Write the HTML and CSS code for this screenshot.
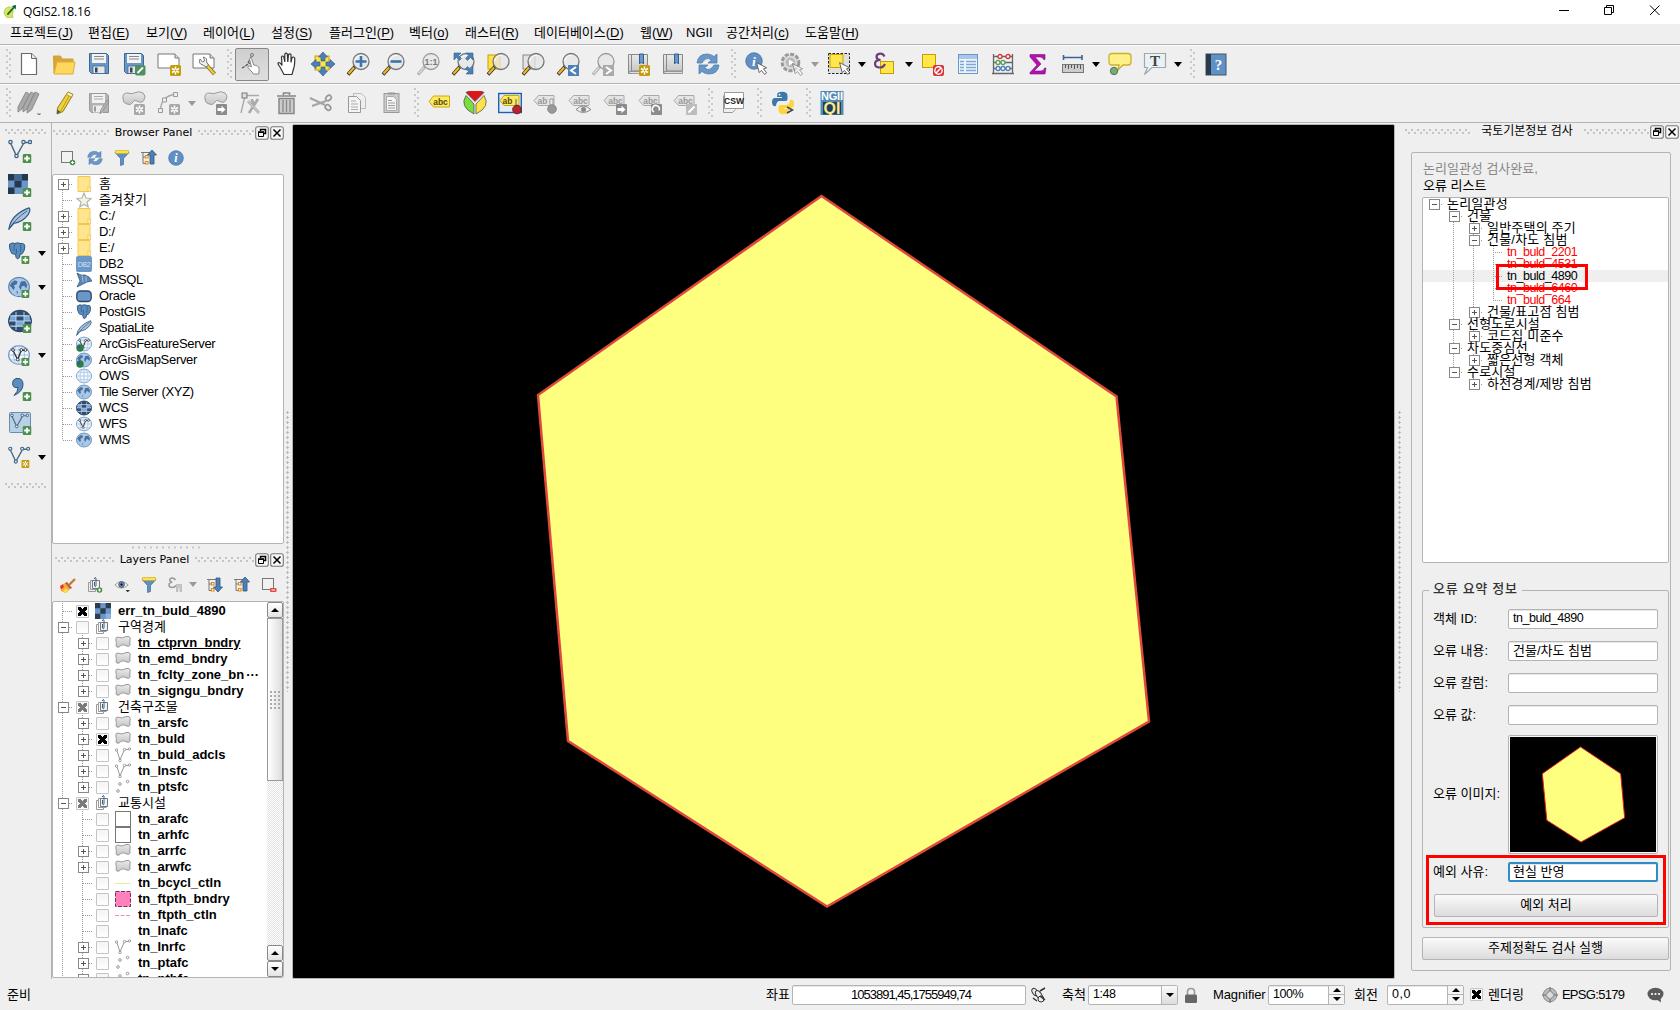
FILE: index.html
```html
<!DOCTYPE html>
<html lang="ko">
<head>
<meta charset="utf-8">
<title>QGIS2.18.16</title>
<link rel="stylesheet" href="styles.css">
</head>
<body>
<svg class="defs">
<defs>
<linearGradient id="gy" x2="1" y2="1"><stop offset="0" stop-color="#fdf094"/><stop offset="1" stop-color="#e3bd1c"/></linearGradient>
<linearGradient id="gg" x2="0" y2="1"><stop offset="0" stop-color="#e9e9e9"/><stop offset="1" stop-color="#c4c4c4"/></linearGradient>
<symbol id="plus" viewBox="0 0 9 9"><rect width="9" height="9" rx="1.5" fill="#4e8f4e"/><path d="M4.5 1.7v5.6M1.7 4.5h5.6" stroke="#fff" stroke-width="1.8"/></symbol>
<symbol id="star" viewBox="0 0 11 11"><rect width="11" height="11" rx="1.5" fill="#c49c0c"/><path d="M5.5 1.5v8M2 3.5l7 4M9 3.5l-7 4" stroke="#fff" stroke-width="1.5"/><circle cx="5.5" cy="5.5" r="1" fill="#c49c0c"/></symbol>
<symbol id="gstar" viewBox="0 0 11 11"><rect width="11" height="11" rx="1.5" fill="#a8a8a8"/><path d="M5.5 1.5v8M2 3.5l7 4M9 3.5l-7 4" stroke="#fff" stroke-width="1.5"/><circle cx="5.5" cy="5.5" r="1" fill="#a8a8a8"/></symbol>
<symbol id="garrow" viewBox="0 0 11 11"><rect width="11" height="11" rx="1" fill="#8b8b8b"/><path d="M1.500 4h4V1.700l4 3.800-4 3.800V7h-4z" fill="#fff"/></symbol>
<symbol id="cur" viewBox="0 0 12 13"><path d="M.6.6l2.600 10 2.200-2.200 3.200 4 2-1.600-3.200-4 3.200-1z" fill="#fff" stroke="#555" stroke-width=".9"/></symbol>
<symbol id="lens" viewBox="0 0 24 24"><path d="M9.500 14L2 22.500" stroke="#333" stroke-width="3.600"/><path d="M8 15.600L2.600 21.700" stroke="#f2b81c" stroke-width="2.200"/><circle cx="15" cy="9.500" r="8" fill="#e4e6e7" fill-opacity=".75" stroke="#777" stroke-width="1.300"/><path d="M9 9a6 6 0 0 1 7-5.500" stroke="#fff" fill="none"/></symbol>
<symbol id="glens" viewBox="0 0 24 24"><path d="M9.500 14L2 22.500" stroke="#aaa" stroke-width="3.200"/><path d="M8 15.600L2.600 21.700" stroke="#ddd" stroke-width="1.500"/><circle cx="15" cy="9.500" r="8" fill="#e8e8e8" stroke="#9a9a9a" stroke-width="1.300"/></symbol>
<symbol id="new" viewBox="0 0 24 24"><path d="M4.500 1.500h10l5 5v16h-15z" fill="#fff" stroke="#6b6b6b" stroke-width="1.200"/><path d="M14.500 1.500v5h5" fill="#e8e8e8" stroke="#6b6b6b"/></symbol>
<symbol id="open" viewBox="0 0 24 24"><path d="M1.500 4h7l1.500 3h11v4H5L2 21z" fill="#d7a63a" stroke="#d2a237"/><path d="M5 10h18l-2 12H2z" fill="#ffd75e" stroke="#dfad3f"/></symbol>
<symbol id="save" viewBox="0 0 24 24"><path d="M2.500 1.500h17l2 2v18h-17l-2-2z" fill="#6a97c8" stroke="#3c6693"/><rect x="5" y="2" width="14" height="9" fill="#f4f4f4"/><path d="M7 4.500h10M7 7h10" stroke="#888"/><rect x="6" y="14" width="12" height="7.500" fill="#e6e6e6" stroke="#3c6693" stroke-width=".8"/><rect x="8" y="15.500" width="2.500" height="5" fill="#345"/></symbol>
<symbol id="gsave" viewBox="0 0 24 24"><path d="M2.500 2.500h17l2 2v17h-17l-2-2z" fill="#b3b3b3" stroke="#999"/><rect x="5" y="3" width="13" height="9" fill="#f1f1f1"/><path d="M7 5.500h9M7 8h9" stroke="#aaa"/><rect x="6" y="14.500" width="10" height="7" fill="#eee"/><path d="M8 15.500v5" stroke="#999" stroke-width="2"/><path d="M22 10l-7 11-2 2 .5-3.500L20 9z" fill="#bbb" stroke="#888" stroke-width=".8"/></symbol>
<symbol id="saveas" viewBox="0 0 24 24"><use href="#save"/><rect x="13" y="13" width="10.500" height="10.500" rx="2" fill="#4e8f5e"/><path d="M15.500 21l5.500-5.500" stroke="#fff" stroke-width="2"/></symbol>
<symbol id="comp" viewBox="0 0 24 24"><path d="M1 2h17l4 4v10H1z" fill="#fff" stroke="#777"/><path d="M18 2v4h4" fill="#ddd" stroke="#777"/></symbol>
<symbol id="ncomp" viewBox="0 0 24 24"><use href="#comp"/><use href="#star" x="13" y="13" width="11" height="11"/></symbol>
<symbol id="mcomp" viewBox="0 0 24 24"><use href="#comp"/><path d="M14.500 13l8 9" stroke="#8c6b1d" stroke-width="4"/><path d="M15 13.500l7.200 8.200" stroke="#f1cb48" stroke-width="2.200"/><path d="M8 7q-2 5 3 6l3 2 2.500-2-2-3q1-4-3-5l1 4-2 1z" fill="#eee" stroke="#777"/></symbol>
<symbol id="touch" viewBox="0 0 24 24"><path d="M2 16l8-5M8 11l3.500-7" stroke="#555" stroke-width="1.200" stroke-dasharray="3 1"/><circle cx="12" cy="3" r="1.500" fill="none" stroke="#777"/><path d="M9.500 7q1-2 2.200 0l2 6 3 .5q2.800 1 2.500 4l-.5 4.500h-5L8 15.500q0-2 2-1.500l1.500 1z" fill="#fff" stroke="#888"/></symbol>
<symbol id="hand" viewBox="0 0 24 24"><path d="M8 22.500L4 15Q.8 11 2.800 10.500q1.700 0 3.200 3L5.500 5q.8-2 2.300 0l1 5V2q1.300-1.800 2.500 0l.5 8 .7-7.500q1.500-1.500 2.500.2L15 10.500l1-5q1.700-1.200 2.700.5Q19 13 17.500 17l-1.500 5.500z" fill="#fff" stroke="#333" stroke-width="1.200"/></symbol>
<symbol id="pan" viewBox="0 0 24 24"><rect x="4" y="4" width="14" height="14" fill="#ffe24a" stroke="#c6a000"/><path d="M12 0l4.500 5H14v4h-4V5H7.500zM12 24l-4.500-5H10v-4h4v4h2.500zM0 12l5-4.500V10h4v4H5v2.500zM24 12l-5 4.500V14h-4v-4h4V7.500z" fill="#4c80b6" stroke="#315f8f" stroke-width=".7"/></symbol>
<symbol id="zin" viewBox="0 0 24 24"><use href="#lens"/><path d="M15 4v11M9.500 9.500h11" stroke="#3d73ad" stroke-width="2.600"/></symbol>
<symbol id="zout" viewBox="0 0 24 24"><use href="#lens"/><path d="M9.500 9.500h11" stroke="#3d73ad" stroke-width="2.600"/></symbol>
<symbol id="z11" viewBox="0 0 24 24"><use href="#glens"/><text x="15" y="12.500" class="ib" font-size="9" text-anchor="middle" fill="#777">1:1</text></symbol>
<symbol id="zfull" viewBox="0 0 24 24"><use href="#lens"/><path d="M3 1h7L7.500 3.500l3 3-2 2-3-3L3 8zM22 1h-7l2.500 2.500-3 3 2 2 3-3L22 8zM22 22h-7l2.500-2.500-3-3 2-2 3 3L22 14z" fill="#4c80b6" stroke="#315f8f" stroke-width=".6"/></symbol>
<symbol id="zsel" viewBox="0 0 24 24"><rect x="2" y="3" width="12" height="14" fill="#ffe24a" stroke="#c6a000"/><use href="#lens"/></symbol>
<symbol id="zlay" viewBox="0 0 24 24"><rect x="2" y="3" width="12" height="14" fill="#e3e3e3" stroke="#888"/><use href="#lens"/></symbol>
<symbol id="zprev" viewBox="0 0 24 24"><use href="#lens"/><rect x="12" y="13" width="11" height="11" fill="#4c80b6"/><path d="M20 15l-5 3.500 5 3.500" fill="none" stroke="#fff" stroke-width="2"/></symbol>
<symbol id="znext" viewBox="0 0 24 24"><use href="#glens"/><rect x="12" y="13" width="11" height="11" fill="#aaa"/><path d="M15 15l5 3.500-5 3.500" fill="none" stroke="#fff" stroke-width="2"/></symbol>
<symbol id="book" viewBox="0 0 24 24"><path d="M2.500 2.500h3v19h-3zM5.500 2.500h16v16.500h-16z" fill="url(#gg)" stroke="#888"/><path d="M3 19.500h18.500v2H3z" fill="#ddd" stroke="#888" stroke-width=".8"/><path d="M13.500 2h4v10l-2-2-2 2z" fill="#6a97c8" stroke="#315f8f"/></symbol>
<symbol id="nbook" viewBox="0 0 24 24"><use href="#book"/><use href="#star" x="13" y="13" width="11" height="11"/></symbol>
<symbol id="refresh" viewBox="0 0 24 24"><path d="M1 11Q2 2 11 2q4 0 7 2.500L21 2v9h-9l3.500-3Q10 4 6 11zM23 13q-1 9-10 9-4 0-7-2.500L3 22v-9h9l-3.500 3Q14 20 18 13z" fill="#6a97c8" stroke="#4477aa" stroke-width=".7"/></symbol>
<symbol id="info" viewBox="0 0 24 24"><circle cx="12" cy="12" r="11" fill="#5f8fc3" stroke="#3e6c9f"/><text x="12" y="18" text-anchor="middle" class="is" font-size="18" fill="#fff">i</text></symbol>
<symbol id="ident" viewBox="0 0 24 24"><use href="#info" width="18" height="18"/><use href="#cur" x="11" y="10" width="12" height="13"/></symbol>
<symbol id="action" viewBox="0 0 24 24"><circle cx="10.500" cy="10.500" r="8.300" fill="#ddd" stroke="#999" stroke-width="3" stroke-dasharray="4 1.500"/><circle cx="10.500" cy="10.500" r="5" fill="#bbb"/><path d="M9 7.500l5 3-5 3z" fill="#fff"/><use href="#cur" x="12" y="11" width="12" height="13" opacity=".6"/></symbol>
<symbol id="select" viewBox="0 0 24 24"><path d="M1.500 1.500h21v20h-21z" fill="#e0e0e0" stroke="#222" stroke-dasharray="2.500 1.500"/><path d="M3 2.500h13v13H3z" fill="#ffe64a" stroke="#c6a000"/><use href="#cur" x="12" y="10" width="12" height="13"/></symbol>
<symbol id="eps" viewBox="0 0 24 24"><rect x="6.500" y="9.500" width="13" height="12" fill="#ffe64a" stroke="#c6a000"/><path d="M10.500 4.500Q9 1.500 6 1.700 2.500 2 2.500 5q0 2.500 4 3Q1 8 1 12q.3 3.500 4.500 3.500 4 0 5.500-3.500" fill="none" stroke="#6c3d78" stroke-width="2.200"/></symbol>
<symbol id="desel" viewBox="0 0 24 24"><rect x="1.500" y="2.500" width="13" height="13" fill="#ffe64a" stroke="#c6a000"/><rect x="12" y="13" width="11" height="11" rx="2" fill="#d9303a"/><circle cx="17.500" cy="18.500" r="3.700" fill="none" stroke="#fff" stroke-width="1.400"/><path d="M15 21l5-5" stroke="#fff" stroke-width="1.400"/></symbol>
<symbol id="table" viewBox="0 0 24 24"><rect x="2.500" y="2.500" width="19" height="19" fill="#eef4fb" stroke="#6b97c8"/><rect x="3" y="3" width="18" height="4" fill="#a8c6e8"/><path d="M4 9.500h4M10 9.500h10M4 12.500h4M10 12.500h10M4 15.500h4M10 15.500h10M4 18.500h4M10 18.500h10" stroke="#7fa7d4" stroke-width="1.300"/></symbol>
<symbol id="abac" viewBox="0 0 24 24"><path d="M2.500 2v19M21.500 2v19M2 4.500h20M2 10.500h20M2 16.500h20M1 21.500h22" stroke="#666" stroke-width="1.300"/><g fill="#fff" stroke-width="1.300"><g stroke="#d5323a"><circle cx="9" cy="4.500" r="2"/><circle cx="17" cy="4.500" r="2"/></g><g stroke="#55a055"><circle cx="7" cy="10.500" r="2"/><circle cx="12" cy="10.500" r="2"/></g><g stroke="#4c80b6"><circle cx="7" cy="16.500" r="2"/><circle cx="12" cy="16.500" r="2"/><circle cx="17" cy="16.500" r="2"/></g></g></symbol>
<symbol id="sigma" viewBox="0 0 24 24"><path d="M4 2.500h15v5h-1.500Q17 5 14 5H9l6 7-7 7h7q3 0 3.500-3H20l-1 6H4v-1.500l7-7.500-7-8z" fill="#b012ae" stroke="#840f82" stroke-width=".6"/></symbol>
<symbol id="meas" viewBox="0 0 24 24"><path d="M2 5.500h19M2.500 3v5M21 3v5" stroke="#3d648f" stroke-width="1.600"/><rect x="1.500" y="12.500" width="21" height="8" fill="#ccc" stroke="#777"/><path d="M4.500 13v3M7.500 13v4M10.500 13v3M13.500 13v4M16.500 13v3M19.500 13v4" stroke="#555"/></symbol>
<symbol id="tips" viewBox="0 0 24 24"><path d="M4 1.500h16q3 0 3 3V10q0 3-3 3h-5l-5 5 1-5H4q-3 0-3-3V4.500q0-3 3-3z" fill="#fff08a" stroke="#cdae2c" stroke-width="1.300"/><circle cx="6" cy="19" r="3.700" fill="#78a977" stroke="#4c7b55"/></symbol>
<symbol id="tanno" viewBox="0 0 24 24"><path d="M1.500 1.500h21v14H9l-7.500 7 3-7h-3z" fill="#ebf2f5" stroke="#a0a8ac" stroke-width="1.200"/><text x="12" y="13.500" text-anchor="middle" class="isb" font-size="15" fill="#444">T</text></symbol>
<symbol id="help" viewBox="0 0 24 24"><rect x="2" y="2" width="20" height="21" fill="#5f91c7" stroke="#456"/><rect x="2" y="2" width="5" height="21" fill="#2c3b4c"/><text x="14.500" y="18" text-anchor="middle" class="isb" font-size="15" fill="#fff">?</text></symbol>
<symbol id="pencil" viewBox="0 0 24 24"><path d="M16 1l5 2.500-10 17L5 23l.5-6z" fill="#f0d33a" stroke="#8c7a28"/><path d="M18.500 2.500l-10 18" stroke="#b8991b"/><path d="M5.300 18.500l3.500 2.500L5 23z" fill="#555"/><path d="M16 1l5 2.500-1.500 2.500-5-2.500z" fill="#fff6b0" stroke="#998830" stroke-width=".7"/></symbol>
<symbol id="gpencils" viewBox="0 0 24 24"><g fill="#a9a9a9" stroke="#8d8d8d"><path d="M9 1l3.500 2L5 18l-4 3 0-5zM14 1l3.500 2-7.500 15-4 3 0-5zM18 1l4 2-7.500 16-4.500 3 .5-5z"/></g><path d="M19.500 22.500h5l-2.500 2z" fill="#777"/></symbol>
<symbol id="blob" viewBox="0 0 24 24"><path d="M1 8Q0 1.500 6 2q3 1.500 6 0 5-2.500 9 0 3.500 3 1 7-2 4-7 1-3-1.500-4 1-2 4-6 2Q1 12 1 8z" fill="url(#gg)" stroke="#999"/></symbol>
<symbol id="addf" viewBox="0 0 24 24"><use href="#blob"/><use href="#gstar" x="12" y="13" width="11" height="11"/></symbol>
<symbol id="movef" viewBox="0 0 24 24"><use href="#blob"/><use href="#garrow" x="12" y="13" width="11" height="11"/></symbol>
<symbol id="node" viewBox="0 0 24 24"><path d="M3.500 19Q4 5 18 3.500" fill="none" stroke="#aaa" stroke-width="1.400"/><g fill="#eee" stroke="#999"><path d="M1.500 17.500h4v4h-4zM5.500 7h4v4h-4zM16.500 1.500h4v4h-4z"/></g><use href="#gstar" x="12" y="13" width="11" height="11"/></symbol>
<symbol id="nodet" viewBox="0 0 24 24"><path d="M6 4.500h14M6 5L2 22" stroke="#aaa" stroke-width="1.400"/><rect x="3" y="2" width="5" height="5" fill="#ddd" stroke="#777"/><path d="M9 10l11 12M19 8l-9 14M13 8q0 4 3 5" stroke="#aaa" stroke-width="2.600" fill="none"/><path d="M9 10l11 12" stroke="#ddd"/></symbol>
<symbol id="trash" viewBox="0 0 24 24"><path d="M5 7.500h15v15H5z" fill="#ccc" stroke="#888" stroke-width="1.500"/><path d="M3 5h19M9.500 4V2h6v2" stroke="#888" stroke-width="1.600" fill="none"/><path d="M9 9v12M12.500 9v12M16 9v12" stroke="#888" stroke-width="1.300"/></symbol>
<symbol id="cut" viewBox="0 0 24 24"><path d="M1 7l15 7M3 15l14-5" stroke="#a4a4a4" stroke-width="2"/><g fill="none" stroke="#999" stroke-width="1.700"><ellipse cx="19.500" cy="7" rx="3" ry="2.300" transform="rotate(-40 19.500 7)"/><ellipse cx="19" cy="16.500" rx="3" ry="2.300" transform="rotate(40 19 16.500)"/></g></symbol>
<symbol id="copy" viewBox="0 0 24 24"><path d="M9.500 2.500h8l4 4v11h-12z" fill="#eee" stroke="#bbb"/><path d="M4.500 5.500h8l4 4v12h-12z" fill="#f4f4f4" stroke="#999"/><path d="M7 10h5M7 13h7M7 16h7M7 18.500h7" stroke="#aaa"/></symbol>
<symbol id="paste" viewBox="0 0 24 24"><rect x="5" y="2.500" width="15" height="19" fill="#ccc" stroke="#999"/><path d="M7.500 5.500h7l3 3v11h-10z" fill="#f6f6f6" stroke="#aaa"/><path d="M9 9.500h4M9 12h7M9 14.500h7M9 17h7" stroke="#999"/><path d="M9 1.500h7v2H9z" fill="#999"/></symbol>
<symbol id="tag" viewBox="0 0 24 24"><path d="M1 10.500L5.500 5H21.500v11H5.500z" fill="#ffe95c" stroke="#c8a818"/><text x="12.500" y="13.500" text-anchor="middle" class="ib" font-size="8.500" fill="#554a10">abc</text></symbol>
<symbol id="gtag" viewBox="0 0 24 24"><path d="M1 9.500l4.500-5h15.500v10h-15.500z" fill="#e4e4e4" stroke="#aaa"/><text x="12.500" y="12.500" text-anchor="middle" class="ib" font-size="8.500" fill="#999">abc</text></symbol>
<symbol id="pie" viewBox="0 0 24 24"><g stroke="#555" stroke-width=".8"><path d="M12 12L3 3q9-5.500 18 0z" fill="#dd1717" transform="translate(0 -1.500)"/><path d="M11 13L3 4.500q-7 11 8 18.500z" fill="#79dd3c"/><path d="M13 13l8-8.500q7 11-8 18.500z" fill="#ffe14a"/></g></symbol>
<symbol id="tagpin" viewBox="0 0 24 24"><rect x=".7" y="2.500" width="22.600" height="19" fill="#e5ecf5" stroke="#1a5fb8" stroke-width="1.400"/><path d="M2 9.500l4-5h15v10h-15z" fill="#ffe95c" stroke="#c8a818"/><text x="4.500" y="12.500" class="ib" font-size="8.500" fill="#554a10">ab</text><path d="M18 8v8" stroke="#888" stroke-width="1.500"/><circle cx="19" cy="18.500" r="4.300" fill="#b4262c" stroke="#7c1318"/></symbol>
<symbol id="gpin" viewBox="0 0 24 24"><path d="M1 9.500l4.500-5h15.500v10h-15.500z" fill="#e4e4e4" stroke="#aaa"/><text x="4.500" y="12.500" class="ib" font-size="8.500" fill="#999">ab</text><path d="M17 8h3v7h-3z" fill="#eee" stroke="#999"/><circle cx="19" cy="18" r="4.300" fill="#999" stroke="#888"/></symbol>
<symbol id="geye" viewBox="0 0 24 24"><use href="#gtag"/><path d="M8 18.500q7-7 15 0-8 6-15 0z" fill="#eee" stroke="#888"/><circle cx="15.500" cy="18.500" r="2.500" fill="#888"/></symbol>
<symbol id="gmove" viewBox="0 0 24 24"><use href="#gtag"/><use href="#garrow" x="13" y="13" width="11" height="11"/></symbol>
<symbol id="grot" viewBox="0 0 24 24"><use href="#gtag"/><rect x="13" y="13" width="11" height="11" rx="1" fill="#8b8b8b"/><path d="M16 21a3.500 3.500 0 1 1 5-1.500" fill="none" stroke="#fff" stroke-width="1.600"/></symbol>
<symbol id="gedit" viewBox="0 0 24 24"><use href="#gtag"/><rect x="13" y="13" width="11" height="11" rx="1" fill="#bdbdbd"/><path d="M15.500 21.500l6-6" stroke="#fff" stroke-width="2"/></symbol>
<symbol id="csw" viewBox="0 0 24 24"><path d="M1.500 4.500v17h9l3-3" fill="#eee" stroke="#999"/><path d="M2.500 1.500h19v16h-19z" fill="#fff" stroke="#999"/><text x="12" y="13" text-anchor="middle" class="ib" font-size="8.500" fill="#222">CSW</text></symbol>
<symbol id="py" viewBox="0 0 24 24"><path d="M6.500 2q5-2.500 9 0 1 1 1 3v3q0 2-2 2H8.500q-3 0-3.500 5Q1 16 1 11q0-4 3-4h7V6H6z" fill="#3c78aa"/><path d="M17.500 22q-5 2.500-9 0-1-1-1-3v-3q0-2 2-2h6q3 0 3.500-5 4-1 4 4 0 4-3 4h-7v1h5z" fill="#ffd43b"/><circle cx="8.500" cy="3.700" r=".9" fill="#fff"/><path d="M16 16l5.500 3-5.500 3" fill="none" stroke="#444" stroke-width="1.500"/></symbol>
<symbol id="ngii" viewBox="0 0 24 24"><rect x=".5" y="0" width="23" height="24" fill="#528bb5"/><text x="12" y="9" text-anchor="middle" class="ib" font-size="11" fill="#fff" textLength="22">NGII</text><rect x="3" y="11" width="18" height="12.500" fill="#1c3f5a"/><text x="12" y="23" text-anchor="middle" class="ib" font-size="16" fill="#ffe98a">QI</text></symbol>
<symbol id="vee" viewBox="0 0 24 24"><path d="M2.500 4l6 13L15.500 4.500M17 3.500h4" fill="none" stroke="#4a6b8d" stroke-width="1.500"/><g fill="#dfe8f0" stroke="#3f6387" stroke-width="1.200"><circle cx="2.500" cy="3" r="1.700"/><circle cx="8.500" cy="17" r="1.700"/><circle cx="15.500" cy="3" r="1.700"/><circle cx="22" cy="3" r="1.600"/></g></symbol>
<symbol id="lvec" viewBox="0 0 24 24"><use href="#vee"/><use href="#plus" x="14.500" y="15" width="9" height="9"/></symbol>
<symbol id="check" viewBox="0 0 24 24"><path d="M0 0h24v24H0z" fill="#6b97c8"/><path d="M0 0h8v8H0zM16 0h8v8h-8zM8 8h8v8H8zM0 16h8v8H0z" fill="#2b3d52"/><path d="M16 16h8v8h-8z" fill="#8db4dd"/></symbol>
<symbol id="chk4" viewBox="0 0 20 20"><path d="M0 0h20v20H0z" fill="#6b97c8"/><path d="M0 0h6.500v6.500H0zM13.500 0H20v6.500h-6.500zM6.500 6.500h7v7h-7zM0 13.500h6.500V20H0z" fill="#23374f"/><path d="M6.500 0h7v6.500h-7z" fill="#41668f"/></symbol>
<symbol id="lras" viewBox="0 0 24 24"><use href="#chk4" y="1" width="20" height="20"/><use href="#plus" x="14.500" y="15" width="9" height="9"/></symbol>
<symbol id="feather" viewBox="0 0 24 24"><path d="M1 23Q3 8 22 1q2 2-1 7-6 8-15 9z" fill="#a9c2de" stroke="#345b84" stroke-width="1.300"/><path d="M1 23Q8 12 20 4" stroke="#345b84" fill="none"/></symbol>
<symbol id="lfea" viewBox="0 0 24 24"><use href="#feather" width="23" height="23"/><use href="#plus" x="14.500" y="15" width="9" height="9"/></symbol>
<symbol id="eleph" viewBox="0 0 24 24"><path d="M2 3q4-3 7-1 4-2 7 0 6-1 6 4 0 6-4 10l-2-1q0 6-3 7-3 0-3-6-3 0-5-1Q1 9 2 3z" fill="#5c8dc0" stroke="#2e5479" stroke-width="1.300"/><path d="M9 3q-2 4-1 9M16 3q2 5 0 10M11 9v6" stroke="#2e5479" fill="none"/></symbol>
<symbol id="lele" viewBox="0 0 24 24"><use href="#eleph" width="20" height="20"/><use href="#plus" x="14.500" y="15" width="9" height="9"/></symbol>
<symbol id="gearth" viewBox="0 0 24 24"><ellipse cx="12" cy="12" rx="11.300" ry="10.500" fill="#a9c8e8" stroke="#5a87b5" stroke-width="1.200"/><path d="M3.500 7.500l4-3 3 1.500-1 3-3 1 1 2.500-1.500 3-2-3-2-2zM14 6l4.500-.5 2.500 4-1 4-2.500-3-2.500 1-1 4-2-3.500 1-3zM9 16l2 1.500-1 2.500z" fill="#476f9c"/></symbol>
<symbol id="lwms" viewBox="0 0 24 24"><use href="#gearth"/><use href="#plus" x="14.500" y="15" width="9" height="9"/></symbol>
<symbol id="gwcs" viewBox="0 0 24 24"><ellipse cx="12" cy="12" rx="11.300" ry="10.500" fill="#7ba7d8" stroke="#2f4c6d" stroke-width="1.500"/><path d="M3 6Q7 1.500 12 1.500T21 6zM3 18q4 4.500 9 4.500t9-4.500z" fill="#2f4c6d"/><path d="M8 7h8v5H8zM1 12h7v5H2zM16 12h7l-1 5h-6z" fill="#2f4c6d"/><path d="M2 7h20M2 17h20M1 12h22M8 3v18M16 3v18" stroke="#c5daf0" stroke-width=".9"/></symbol>
<symbol id="lwcs" viewBox="0 0 24 24"><use href="#gwcs"/><use href="#plus" x="14.500" y="15" width="9" height="9"/></symbol>
<symbol id="ggrid" viewBox="0 0 24 24"><ellipse cx="12" cy="12" rx="11.300" ry="10.300" fill="#f2f7fd" stroke="#6b97c8" stroke-width="1.300"/><path d="M1 12h22M3 6.500h18M3 17.500h18M12 2v20" stroke="#9abce0"/><ellipse cx="12" cy="12" rx="6" ry="10.300" fill="none" stroke="#9abce0"/></symbol>
<symbol id="gwfs" viewBox="0 0 24 24"><use href="#ggrid"/><path d="M5.500 7l5 10 4-10h4" fill="none" stroke="#333" stroke-width="1.400"/><g fill="#fff" stroke="#333"><circle cx="5.500" cy="6.500" r="1.500"/><circle cx="10.500" cy="17" r="1.500"/><circle cx="14.500" cy="6.500" r="1.500"/><circle cx="19" cy="6.500" r="1.500"/></g></symbol>
<symbol id="lwfs" viewBox="0 0 24 24"><use href="#gwfs"/><use href="#plus" x="14.500" y="15" width="9" height="9"/></symbol>
<symbol id="lcsv" viewBox="0 0 24 24"><path d="M8 1.500q7-1 7 6 0 7-9 11 4-4 4-8-5 1-5.500-4 0-4 3.500-5z" fill="#5c8dc0" stroke="#2e5479"/><use href="#plus" x="14.500" y="15" width="9" height="9"/></symbol>
<symbol id="lvir" viewBox="0 0 24 24"><rect x="1.500" y="1.500" width="21" height="20" rx="1" fill="#b9cfe4" stroke="#6c8cab"/><use href="#vee" x="2" y="2" width="19" height="19"/><use href="#plus" x="14.500" y="15" width="9" height="9"/></symbol>
<symbol id="lnew" viewBox="0 0 24 24"><use href="#vee"/><use href="#star" x="14.500" y="15" width="9" height="9"/></symbol>
<symbol id="addsel" viewBox="0 0 16 16"><rect x="1.500" y="1.500" width="11" height="11" fill="#f2f2f2" stroke="#777"/><circle cx="12.500" cy="12.500" r="2.800" fill="#4e8f4e"/><path d="M12.500 11v3M11 12.500h3" stroke="#fff"/></symbol>
<symbol id="funnel" viewBox="0 0 16 16"><path d="M1 2.500h14l-5.500 6v6l-3 1v-7z" fill="#5f8fc3" stroke="#406c9a" stroke-width=".7"/><path d="M1.500.5h13v3h-13z" fill="#ffe24a" stroke="#c8a818" stroke-width=".6"/></symbol>
<symbol id="coll" viewBox="0 0 16 16"><path d="M0 2.500h9M2 2.500v11h3M2 7h3" stroke="#777" fill="none"/><path d="M4.500 5.500h2.500v2.500h-2.500zM4.500 11.500h2.500v2.500h-2.500z" fill="#fff" stroke="#e88a1a" stroke-width="1.200"/><path d="M11 0l4.500 5H13v9H9V5H6.500z" fill="#4c80b6" stroke="#2e5479" stroke-width=".8"/></symbol>
<symbol id="expd" viewBox="0 0 16 16"><path d="M0 2.500h9M2 2.500v11h3M2 7h3" stroke="#777" fill="none"/><path d="M4.500 5.500h2.500v2.500h-2.500zM4.500 11.500h2.500v2.500h-2.500z" fill="#fff" stroke="#e88a1a" stroke-width="1.200"/><path d="M11 15l4.500-5H13V1H9v9H6.500z" fill="#4c80b6" stroke="#2e5479" stroke-width=".8"/></symbol>
<symbol id="brush" viewBox="0 0 16 16"><path d="M0 9l5-3 5 6-4 4-5-2z" fill="#f4a93a"/><path d="M0 9l3-1.700 1 3-3 2z" fill="#e33"/><path d="M3 14l3-3 2 2-2 3z" fill="#fd4"/><path d="M5 6l2-1 5 6-2 1z" fill="#b5562c"/><path d="M9 8l6-6" stroke="#c8793a" stroke-width="2.400"/></symbol>
<symbol id="grp" viewBox="0 0 16 16"><path d="M4 5.500H1.500v9h7V13M6 3.500H3.500v9h8" fill="none" stroke="#999"/><path d="M5.500 3.500h7v8h-7z" fill="#f2f2f2" stroke="#777"/><path d="M7.500 5v4q.8 1.500 1.500 0V1q-1-1-1.500 0v1" fill="none" stroke="#3d648f"/></symbol>
<symbol id="addgrp" viewBox="0 0 16 16"><use href="#grp"/><circle cx="12.500" cy="13" r="2.800" fill="#4e8f4e"/><path d="M12.500 11.500v3M11 13h3" stroke="#fff"/></symbol>
<symbol id="eye" viewBox="0 0 18 16"><path d="M1 8q7-8 15 0-8 7-15 0z" fill="#f4f4f4" stroke="#999"/><circle cx="8.500" cy="7.500" r="3.200" fill="#6b8cb8" stroke="#456"/><circle cx="8.500" cy="7.500" r="1.300" fill="#111"/><path d="M13 14h5l-2.500 2z"/></symbol>
<symbol id="geps" viewBox="0 0 16 16"><path d="M7.500 3Q6 .8 4 1 1.800 1.300 1.800 3q0 2 2.500 2Q1 5.500 1 8q.2 2.500 3 2.500T8 8.500" fill="none" stroke="#999" stroke-width="1.500"/><path d="M8.500 7.500h5v7h-1.500V10H10v4.500H8.500z" fill="#ccc" stroke="#aaa" stroke-width=".6"/></symbol>
<symbol id="remsel" viewBox="0 0 16 16"><rect x="1.500" y="1.500" width="11" height="11" fill="#f2f2f2" stroke="#777"/><rect x="9" y="11" width="6.500" height="4" rx="1" fill="#e04848"/><path d="M10.500 13h3.500" stroke="#fff"/></symbol>
<symbol id="fold" viewBox="0 0 16 16"><path d="M2 .5h12v15H2z" fill="#ffe58f" stroke="#efc94f"/><path d="M12 11h2.500v4.500H12z" fill="#fff0b8" stroke="#e9bf45" stroke-width=".7"/></symbol>
<symbol id="fav" viewBox="0 0 16 16"><path d="M8 1l2 5 5 .5-4 3.500 1.200 5L8 12.200 3.800 15 5 10 1 6.500 6 6z" fill="#f4f4ea" stroke="#b4b6a6" stroke-width="1.200"/></symbol>
<symbol id="db2" viewBox="0 0 16 16"><rect width="16" height="16" rx="2" fill="#6b97c8"/><text x="8" y="10.500" text-anchor="middle" class="it" font-size="7" fill="#d6e4f4">DB2</text></symbol>
<symbol id="mssql" viewBox="0 0 16 16"><path d="M1 1l4 2 4 0 4 2 3 4-5 1-4 2-6 3 3-6z" fill="#5c88b8" stroke="#34597f" stroke-width=".8"/><path d="M6 2l1 8M10 4l0 6" stroke="#d0dfee" stroke-width=".6"/></symbol>
<symbol id="ora" viewBox="0 0 16 16"><rect x=".8" y="3" width="14.400" height="10.500" rx="3.500" fill="#6b97c8" stroke="#2b4766" stroke-width="1.300"/></symbol>
<symbol id="agf" viewBox="0 0 16 16"><use href="#gwfs"/><circle cx="4" cy="12" r="3.700" fill="#2f7d46"/><circle cx="3" cy="11" r="1.300" fill="#2a5a9c"/></symbol>
<symbol id="agm" viewBox="0 0 16 16"><use href="#gearth"/><circle cx="4" cy="12" r="3.700" fill="#2f7d46"/><circle cx="3" cy="11" r="1.300" fill="#2a5a9c"/></symbol>
<symbol id="poly" viewBox="0 0 16 16"><path d="M.8 5Q.5 2 3 2q2 1 4.500.8Q11 1 14 1.500q2 1.500 1 4.500-.8 2 .2 4-1.200 2.500-4 .8Q9 9.500 7 10q-1.500.5-3 2-2.500 1-3-1.500 1-2.500-.2-5.500z" fill="url(#gg)" stroke="#999"/></symbol>
<symbol id="line" viewBox="0 0 16 16"><path d="M2 4l3 9L9.500 2.500H14" fill="none" stroke="#9a9a92"/><g fill="#fff" stroke="#888" stroke-width=".8"><circle cx="1.500" cy="3" r="1.200"/><circle cx="5" cy="13.500" r="1.200"/><circle cx="9.500" cy="2.500" r="1.200"/><circle cx="14.500" cy="2" r="1.200"/></g></symbol>
<symbol id="pts" viewBox="0 0 16 16"><g fill="#fff" stroke="#999"><circle cx="5" cy="5" r="1.300"/><circle cx="12.500" cy="2.500" r="1.300"/><circle cx="3" cy="12" r="1.300"/></g></symbol>
<symbol id="sq" viewBox="0 0 16 16"><rect x=".5" y=".5" width="15" height="15" fill="#fff" stroke="#777"/></symbol>
<symbol id="pink" viewBox="0 0 16 16"><rect x=".5" y=".5" width="15" height="15" fill="#ff80bd" stroke="#7a3058" stroke-dasharray="4 1.500"/></symbol>
<symbol id="yl" viewBox="0 0 16 16"><path d="M0 8.500h16" stroke="#e4f08a"/></symbol>
<symbol id="pl" viewBox="0 0 16 16"><path d="M0 8.500h16" stroke="#f58ab5" stroke-dasharray="4 1.500"/></symbol>
<symbol id="none" viewBox="0 0 16 16"></symbol>
<symbol id="float" viewBox="0 0 14 14"><rect x=".7" y=".7" width="12.600" height="12.600" rx="2" fill="#f6f6f6" stroke="#777" stroke-width="1.100"/><path d="M5.500 5V3.500h5v4H9" fill="none" stroke="#000" stroke-width="1.500"/><path d="M3.500 6.500h5v4h-5z" fill="none" stroke="#000"/><path d="M3 6h6" stroke="#000" stroke-width="1.600"/></symbol>
<symbol id="close" viewBox="0 0 14 14"><rect x=".7" y=".7" width="12.600" height="12.600" rx="2" fill="#f6f6f6" stroke="#777" stroke-width="1.100"/><path d="M3.500 3.500l7 7M10.500 3.500l-7 7" stroke="#000" stroke-width="1.500"/></symbol>
</defs>
</svg>

<header class="title">
<svg class="logo" viewBox="0 0 16 16"><path d="M7 2Q0 4 1.500 10q2 6 7 4l3 .5-1-3Q13 6 10 3z" fill="#d8e85a" stroke="#a3b72c" stroke-width=".7"/><path d="M5 11L14 1" stroke="#0f6b33" stroke-width="2"/><path d="M10 1l5-1-.5 5z" fill="#0f6b33"/></svg>
<span class="name">QGIS2.18.16</span>
<svg class="win" viewBox="0 0 110 14"><path d="M4 7.500h10" stroke="#000"/><path d="M49.500 4.500h7v7h-7zM51.500 4.500v-2h7v7h-2" fill="none" stroke="#000"/><path d="M95 2.500l9.500 9.500M104.500 2.500L95 12" stroke="#000"/></svg>
</header>
<nav class="menu"><span>프로젝트(<u>J</u>)</span><span>편집(<u>E</u>)</span><span>보기(<u>V</u>)</span><span>레이어(<u>L</u>)</span><span>설정(<u>S</u>)</span><span>플러그인(<u>P</u>)</span><span>벡터(<u>o</u>)</span><span>래스터(<u>R</u>)</span><span>데이터베이스(<u>D</u>)</span><span>웹(<u>W</u>)</span><span>NGII</span><span>공간처리(<u>c</u>)</span><span>도움말(<u>H</u>)</span></nav>

<div class="bar">
<i class="grip first"></i><b><svg><use href="#new"/></svg></b><b><svg><use href="#open"/></svg></b><b><svg><use href="#save"/></svg></b><b><svg><use href="#saveas"/></svg></b><b><svg><use href="#ncomp"/></svg></b><b><svg><use href="#mcomp"/></svg></b>
<i class="grip"></i><b class="on"><svg><use href="#touch"/></svg></b><b><svg><use href="#hand"/></svg></b><b><svg><use href="#pan"/></svg></b><b><svg><use href="#zin"/></svg></b><b><svg><use href="#zout"/></svg></b><b><svg><use href="#z11"/></svg></b><b><svg><use href="#zfull"/></svg></b><b><svg><use href="#zsel"/></svg></b><b><svg><use href="#zlay"/></svg></b><b><svg><use href="#zprev"/></svg></b><b><svg><use href="#znext"/></svg></b><b><svg><use href="#nbook"/></svg></b><b><svg><use href="#book"/></svg></b><b><svg><use href="#refresh"/></svg></b>
<i class="grip"></i><b><svg><use href="#ident"/></svg></b><b><svg><use href="#action"/></svg></b><i class="dd dim"></i><b><svg><use href="#select"/></svg></b><i class="dd"></i><b><svg><use href="#eps"/></svg></b><i class="dd"></i><b><svg><use href="#desel"/></svg></b><b><svg><use href="#table"/></svg></b><b><svg><use href="#abac"/></svg></b><b><svg><use href="#sigma"/></svg></b><b><svg><use href="#meas"/></svg></b><i class="dd"></i><b><svg><use href="#tips"/></svg></b><b><svg><use href="#tanno"/></svg></b><i class="dd"></i>
<i class="grip"></i><b><svg><use href="#help"/></svg></b>
</div>
<div class="bar two">
<i class="grip first"></i><b><svg><use href="#gpencils"/></svg></b><b><svg><use href="#pencil"/></svg></b><b><svg><use href="#gsave"/></svg></b><b><svg><use href="#addf"/></svg></b><b><svg><use href="#node"/></svg></b><i class="dd dim"></i><b><svg><use href="#movef"/></svg></b><b><svg><use href="#nodet"/></svg></b><b><svg><use href="#trash"/></svg></b><b><svg><use href="#cut"/></svg></b><b><svg><use href="#copy"/></svg></b><b><svg><use href="#paste"/></svg></b>
<i class="grip"></i><b><svg><use href="#tag"/></svg></b><b><svg><use href="#pie"/></svg></b><b><svg><use href="#tagpin"/></svg></b><b><svg><use href="#gpin"/></svg></b><b><svg><use href="#geye"/></svg></b><b><svg><use href="#gmove"/></svg></b><b><svg><use href="#grot"/></svg></b><b><svg><use href="#gedit"/></svg></b>
<i class="grip"></i><b><svg><use href="#csw"/></svg></b><i class="grip"></i><b><svg><use href="#py"/></svg></b><i class="grip"></i><b><svg><use href="#ngii"/></svg></b>
</div>

<main class="main">
<aside class="tools">
<i class="hgrip"></i>
<div><svg><use href="#lvec"/></svg></div><div><svg><use href="#lras"/></svg></div><div><svg><use href="#lfea"/></svg></div><div><svg><use href="#lele"/></svg><i class="dd"></i></div><div><svg><use href="#lwms"/></svg><i class="dd"></i></div><div><svg><use href="#lwcs"/></svg></div><div><svg><use href="#lwfs"/></svg><i class="dd"></i></div><div><svg><use href="#lcsv"/></svg></div><div><svg><use href="#lvir"/></svg></div><div><svg><use href="#lnew"/></svg><i class="dd"></i></div>
<i class="hgrip end"></i>
</aside>

<section class="left">
<div class="ptitle"><i class="hgrip"></i><span>Browser Panel</span><i class="hgrip"></i><svg><use href="#float"/></svg><svg><use href="#close"/></svg></div>
<div class="ptools"><svg><use href="#addsel"/></svg><svg><use href="#refresh"/></svg><svg><use href="#funnel"/></svg><svg><use href="#coll"/></svg><svg><use href="#info"/></svg></div>
<div class="tree browser">
<div class="row ko"><i class="c first x"></i><svg><use href="#fold"/></svg><span>홈</span></div>
<div class="row ko"><i class="c"></i><svg><use href="#fav"/></svg><span>즐겨찾기</span></div>
<div class="row"><i class="c x"></i><svg><use href="#fold"/></svg><span>C:/</span></div>
<div class="row"><i class="c x"></i><svg><use href="#fold"/></svg><span>D:/</span></div>
<div class="row"><i class="c x"></i><svg><use href="#fold"/></svg><span>E:/</span></div>
<div class="row"><i class="c"></i><svg><use href="#db2"/></svg><span>DB2</span></div>
<div class="row"><i class="c"></i><svg><use href="#mssql"/></svg><span>MSSQL</span></div>
<div class="row"><i class="c"></i><svg><use href="#ora"/></svg><span>Oracle</span></div>
<div class="row"><i class="c"></i><svg><use href="#eleph"/></svg><span>PostGIS</span></div>
<div class="row"><i class="c"></i><svg><use href="#feather"/></svg><span>SpatiaLite</span></div>
<div class="row"><i class="c"></i><svg><use href="#agf"/></svg><span>ArcGisFeatureServer</span></div>
<div class="row"><i class="c"></i><svg><use href="#agm"/></svg><span>ArcGisMapServer</span></div>
<div class="row"><i class="c"></i><svg><use href="#ggrid"/></svg><span>OWS</span></div>
<div class="row"><i class="c"></i><svg><use href="#gearth"/></svg><span>Tile Server (XYZ)</span></div>
<div class="row"><i class="c"></i><svg><use href="#gwcs"/></svg><span>WCS</span></div>
<div class="row"><i class="c"></i><svg><use href="#gwfs"/></svg><span>WFS</span></div>
<div class="row"><i class="c last"></i><svg><use href="#gearth"/></svg><span>WMS</span></div>
</div>
<div class="split"><i></i></div>
<div class="ptitle low"><i class="hgrip"></i><span>Layers Panel</span><i class="hgrip"></i><svg><use href="#float"/></svg><svg><use href="#close"/></svg></div>
<div class="ptools"><svg><use href="#brush"/></svg><svg><use href="#addgrp"/></svg><svg><use href="#eye"/></svg><svg><use href="#funnel"/></svg><svg class="tight"><use href="#geps"/></svg><i class="dd dim"></i><svg><use href="#expd"/></svg><svg><use href="#coll"/></svg><svg><use href="#remsel"/></svg></div>
<div class="tree layers">
<div class="list">
<div class="row"><i class="c"></i><i class="k v"></i><svg><use href="#check"/></svg><span>err_tn_buld_4890</span></div>
<div class="row ko"><i class="c m"></i><i class="k"></i><svg><use href="#grp"/></svg><span>구역경계</span></div>
<div class="row"><i class="c p"></i><i class="c x"></i><i class="k"></i><svg><use href="#poly"/></svg><span><u>tn_ctprvn_bndry</u></span></div>
<div class="row"><i class="c p"></i><i class="c x"></i><i class="k"></i><svg><use href="#poly"/></svg><span>tn_emd_bndry</span></div>
<div class="row"><i class="c p"></i><i class="c x"></i><i class="k"></i><svg><use href="#poly"/></svg><span>tn_fclty_zone_bn<em>···</em></span></div>
<div class="row"><i class="c p"></i><i class="c x last"></i><i class="k"></i><svg><use href="#poly"/></svg><span>tn_signgu_bndry</span></div>
<div class="row ko"><i class="c m"></i><i class="k v half"></i><svg><use href="#grp"/></svg><span>건축구조물</span></div>
<div class="row"><i class="c p"></i><i class="c x"></i><i class="k"></i><svg><use href="#poly"/></svg><span>tn_arsfc</span></div>
<div class="row"><i class="c p"></i><i class="c x"></i><i class="k v"></i><svg><use href="#poly"/></svg><span>tn_buld</span></div>
<div class="row"><i class="c p"></i><i class="c x"></i><i class="k"></i><svg><use href="#line"/></svg><span>tn_buld_adcls</span></div>
<div class="row"><i class="c p"></i><i class="c x"></i><i class="k"></i><svg><use href="#line"/></svg><span>tn_lnsfc</span></div>
<div class="row"><i class="c p"></i><i class="c x last"></i><i class="k"></i><svg><use href="#pts"/></svg><span>tn_ptsfc</span></div>
<div class="row ko"><i class="c m"></i><i class="k v half"></i><svg><use href="#grp"/></svg><span>교통시설</span></div>
<div class="row"><i class="c p"></i><i class="c"></i><i class="k"></i><svg><use href="#sq"/></svg><span>tn_arafc</span></div>
<div class="row"><i class="c p"></i><i class="c"></i><i class="k"></i><svg><use href="#sq"/></svg><span>tn_arhfc</span></div>
<div class="row"><i class="c p"></i><i class="c x"></i><i class="k"></i><svg><use href="#poly"/></svg><span>tn_arrfc</span></div>
<div class="row"><i class="c p"></i><i class="c x"></i><i class="k"></i><svg><use href="#poly"/></svg><span>tn_arwfc</span></div>
<div class="row"><i class="c p"></i><i class="c"></i><i class="k"></i><svg><use href="#yl"/></svg><span>tn_bcycl_ctln</span></div>
<div class="row"><i class="c p"></i><i class="c"></i><i class="k"></i><svg><use href="#pink"/></svg><span>tn_ftpth_bndry</span></div>
<div class="row"><i class="c p"></i><i class="c"></i><i class="k"></i><svg><use href="#pl"/></svg><span>tn_ftpth_ctln</span></div>
<div class="row"><i class="c p"></i><i class="c"></i><i class="k"></i><svg><use href="#none"/></svg><span>tn_lnafc</span></div>
<div class="row"><i class="c p"></i><i class="c x"></i><i class="k"></i><svg><use href="#line"/></svg><span>tn_lnrfc</span></div>
<div class="row"><i class="c p"></i><i class="c x"></i><i class="k"></i><svg><use href="#pts"/></svg><span>tn_ptafc</span></div>
<div class="row"><i class="c p"></i><i class="c x"></i><i class="k"></i><svg><use href="#pts"/></svg><span>tn_pthfc</span></div>
</div>
<div class="scroll"><i class="btn up"></i><i class="thumb"></i><i class="track"></i><i class="btn up"></i><i class="btn down"></i></div>
</div>
</section>
<div class="vsplit"><i></i></div>

<section class="map"><svg viewBox="0 0 1101 853"><path d="M528.500 70L823.500 270.500 856 595.500 534 780.500 275 615 245 269z" fill="#ffff7f" stroke="#e0483c" stroke-width="2.500"/></svg></section>
<div class="vsplit r"><i></i></div>

<section class="right">
<div class="ptitle"><i class="hgrip"></i><span>국토기본정보 검사</span><i class="hgrip"></i><svg><use href="#float"/></svg><svg><use href="#close"/></svg></div>
<div class="frame">
<p class="done">논리일관성 검사완료,</p>
<p>오류 리스트</p>
<div class="tree errs">
<div class="row"><i class="c solo m"></i><span>논리일관성</span></div>
<div class="row"><i class="c n"></i><i class="c first m"></i><span>건물</span></div>
<div class="row"><i class="c n"></i><i class="c p"></i><i class="c x"></i><span>일반주택의 주기</span></div>
<div class="row"><i class="c n"></i><i class="c p"></i><i class="c m"></i><span>건물/차도 침범</span></div>
<div class="row red"><i class="c n"></i><i class="c p"></i><i class="c p"></i><i class="c"></i><span>tn_buld_2201</span></div>
<div class="row red"><i class="c n"></i><i class="c p"></i><i class="c p"></i><i class="c"></i><span>tn_buld_4531</span></div>
<div class="row sel"><i class="c n"></i><i class="c p"></i><i class="c p"></i><i class="c"></i><span>tn_buld_4890</span><div class="mark"></div></div>
<div class="row red"><i class="c n"></i><i class="c p"></i><i class="c p"></i><i class="c"></i><span>tn_buld_6460</span></div>
<div class="row red"><i class="c n"></i><i class="c p"></i><i class="c p"></i><i class="c last"></i><span>tn_buld_664</span></div>
<div class="row"><i class="c n"></i><i class="c p"></i><i class="c last x"></i><span>건물/표고점 침범</span></div>
<div class="row"><i class="c n"></i><i class="c m"></i><span>선형도로시설</span></div>
<div class="row"><i class="c n"></i><i class="c p"></i><i class="c last x"></i><span>코드집 미준수</span></div>
<div class="row"><i class="c n"></i><i class="c m"></i><span>차도중심선</span></div>
<div class="row"><i class="c n"></i><i class="c p"></i><i class="c last x"></i><span>짧은선형 객체</span></div>
<div class="row"><i class="c n"></i><i class="c last m"></i><span>수로시설</span></div>
<div class="row"><i class="c n"></i><i class="c n"></i><i class="c last x"></i><span>하천경계/제방 침범</span></div>
</div>
<div class="group">
<h3>오류 요약 정보</h3>
<div class="f"><label>객체 ID:</label><div class="in la">tn_buld_4890</div></div>
<div class="f"><label>오류 내용:</label><div class="in">건물/차도 침범</div></div>
<div class="f"><label>오류 칼럼:</label><div class="in"></div></div>
<div class="f"><label>오류 값:</label><div class="in"></div></div>
<div class="f pic"><label>오류 이미지:</label><div class="thumbpic"><svg viewBox="0 0 146 116"><path d="M70.500 10L111 37l4 44.500L71 106 36.500 84 32 37z" fill="#ffff7f" stroke="#e02020"/></svg></div></div>
<div class="f why"><label>예외 사유:</label><div class="in focus">현실 반영</div></div>
<div class="push">예외 처리</div>
<div class="mark2"></div>
</div>
<div class="push run">주제정확도 검사 실행</div>
</div>
</section>
</main>

<footer class="status">
<span class="s0">준비</span><span class="s1">좌표</span><div class="in coord">1053891,45,1755949,74</div>
<svg class="mouse" viewBox="0 0 16 16"><g fill="#eee" stroke="#333"><ellipse cx="4" cy="5" rx="2.500" ry="4" transform="rotate(-35 4 5)"/><ellipse cx="8" cy="8" rx="2.500" ry="5" transform="rotate(-35 8 8)"/><circle cx="10" cy="12" r="3"/></g><path d="M9 4l5-3M9 9l5 4M2 11l4 3" stroke="#333" stroke-width="1.500"/></svg>
<span class="s2">축척</span><div class="in scale la"><span>1:48</span><i class="drop"></i></div>
<svg class="lock" viewBox="0 0 12 16"><path d="M2.500 8V5q0-3.500 3.500-3.500T9.500 5v3" fill="none" stroke="#999" stroke-width="1.600"/><rect y="7.500" width="12" height="8.500" rx="1.500" fill="#666"/></svg>
<span class="s3">Magnifier</span><div class="in spin la"><span>100%</span><i class="ud"></i></div>
<span class="s4">회전</span><div class="in spin la"><span class="wide">0,0</span><i class="ud"></i></div>
<i class="k v"></i><span class="s5">렌더링</span>
<svg class="crs" viewBox="0 0 16 16"><circle cx="8" cy="8" r="6.800" fill="#bbb" stroke="#888"/><path d="M8 0v16M0 8h16" stroke="#888" stroke-width="1.600"/><path d="M8 3.500l4.500 4.500L8 12.500 3.500 8z" fill="#ddd" stroke="#777"/></svg>
<span class="s6">EPSG:5179</span>
<svg class="msg" viewBox="0 0 17 16"><ellipse cx="8.500" cy="7" rx="8" ry="6.300" fill="#5a5a5a"/><path d="M9 12l5 3.500-.5-5z" fill="#5a5a5a"/><g fill="#fff"><circle cx="5" cy="7" r="1.100"/><circle cx="8.500" cy="7" r="1.100"/><circle cx="12" cy="7" r="1.100"/></g></svg>
</footer>
</body>
</html>
```
FILE: styles.css
```css
* { box-sizing: border-box; }
body {
  margin: 0; width: 1680px; height: 1010px; overflow: hidden;
  display: flex; flex-direction: column;
  background: #efefef; color: #000;
  font: 13px/16px "Liberation Sans", "Noto Sans CJK KR", sans-serif;
}
i, em { font-style: normal; }
span, label, p { white-space: nowrap; }
.defs { position: absolute; width: 0; height: 0; }
.ib { font-family: "Liberation Sans", sans-serif; font-weight: bold; }
.it { font-family: "Liberation Sans", sans-serif; }
.is { font-family: "Liberation Serif", serif; font-style: italic; font-weight: bold; }
.isb { font-family: "Liberation Serif", serif; font-weight: bold; }

.title { height: 24px; background: #fff; display: flex; align-items: center; padding-left: 3px; }
.logo { width: 14px; height: 16px; }
.name { margin-left: 6px; font: 12px/16px "Open Sans", sans-serif; letter-spacing: -.1px; }
.win { width: 110px; height: 14px; margin-left: auto; margin-right: 15px; margin-top: -4px; }

.menu {
  height: 20px; padding-left: 10px; line-height: 18px;
  display: grid;
  grid-template-columns: 78px 58px 57px 68px 58px 80px 56px 69px 106px 46px 40px 79px auto;
}
.menu u { text-underline-offset: 2px; }

.bar { height: 39px; border-top: 1px solid #b4b4b4; box-shadow: inset 0 1px #fafafa; display: flex; align-items: center; }
.bar b { width: 35px; height: 33px; display: flex; align-items: center; justify-content: center; flex: none; }
.bar svg { width: 24px; height: 24px; }
.bar .on { background: linear-gradient(#cfcfcf, #dedede); border: 1px solid #888; border-radius: 2px; width: 34px; margin-right: 1px; }
.grip {
  width: 6px; height: 30px; margin: 0 2px 0 6px; flex: none;
  background: radial-gradient(circle at 1px 1px, #c8c8c8 1px, transparent 1.300px), radial-gradient(circle at 4px 4px, #c8c8c8 1px, transparent 1.300px);
  background-size: 6px 6px;
}
.grip.first { margin: 0 -1px 0 6px; }
.hgrip {
  height: 6px; display: block;
  background: radial-gradient(circle at 1px 1px, #c4c4c4 1px, transparent 1.300px), radial-gradient(circle at 4px 4px, #c4c4c4 1px, transparent 1.300px);
  background-size: 6px 6px;
}
.dd { width: 12px; flex: none; display: flex; justify-content: center; }
.dd::after { content: ""; border: 4.500px solid transparent; border-top: 5px solid #000; border-bottom: 0; }
.dd.dim::after { border-top-color: #999; }

.main { height: 857px; display: flex; border-top: 1px solid #b4b4b4; }
.tools { width: 52px; border-right: 1px solid #b4b4b4; padding: 6px 5px 0; flex: none; }
.tools .hgrip { margin-bottom: 4px; }
.tools .end { margin-top: 4px; }
.tools div { height: 34px; padding: 0 0 10px 3px; display: flex; align-items: center; }
.tools div svg { width: 24px; height: 24px; }
.tools .dd { margin-left: 4px; position: relative; left: 2px; }

.left { width: 233px; flex: none; display: flex; flex-direction: column; }
.ptitle { height: 18px; display: flex; align-items: center; gap: 1px; padding: 1px 1px 0; line-height: 17px; flex: none; }
.ptitle .hgrip { flex: 1; }
.ptitle span { margin: 0 5px; font: 11px/17px "DejaVu Sans", sans-serif; }
.ptitle svg { width: 14px; height: 14px; }
.ptools { height: 33px; display: flex; align-items: center; gap: 11px; padding-left: 8px; flex: none; }
.ptools svg { width: 16px; height: 16px; flex: none; }
.ptools .tight { margin-right: -8px; }
.ptools .dd { margin-right: -3px; }
.tree { background: #fff; border: 1px solid #b4b4b4; border-radius: 2px; overflow: hidden; }
.browser { height: 370px; width: 232px; flex: none; padding-top: 1px; }
.row { height: 16px; display: flex; align-items: center; letter-spacing: -.3px; position: relative; }
.row svg { width: 16px; height: 16px; flex: none; margin-left: 3px; }
.row span { margin-left: 7px; line-height: 16px; }
.row.ko { letter-spacing: 0; }
.c {
  width: 20px; height: 100%; flex: none; position: relative;
  background: repeating-linear-gradient(#999 0 1px, transparent 1px 2px) 10px 0 / 1px 100% no-repeat,
    repeating-linear-gradient(90deg, #999 0 1px, transparent 1px 2px) 100% 50% / 10px 1px no-repeat;
}
.c.p { background-size: 1px 100%, 0 0; }
.c.n { background: none; }
.c.last { background-size: 1px 50%, 10px 1px; }
.c.first { background-size: 1px 50%, 10px 1px; background-position: 10px 100%, 100% 50%; }
.c.solo { background-size: 0 0, 10px 1px; }
.x::after, .m::after {
  content: ""; position: absolute; left: 6px; top: calc(50% - 5px); width: 9px; height: 9px; border: 1px solid #888;
  background: linear-gradient(#555, #555) center / 5px 1px no-repeat, linear-gradient(#555, #555) center / 1px 5px no-repeat, #fff;
}
.m::after { background: linear-gradient(#555, #555) center / 5px 1px no-repeat, #fff; }
.left .x::after, .left .m::after { left: 5px; }
.left .c { background-position: 9px 0, 100% 50%; }
.left .c.first { background-position: 9px 100%, 100% 50%; }
.k { width: 13px; height: 13px; margin-left: 3px; flex: none; border: 1px solid #c4c4c4; border-radius: 1px; background: linear-gradient(#f4f4f4, #fff); position: relative; }
.k.v::after {
  content: ""; position: absolute; inset: 1px;
  background: linear-gradient(45deg, transparent 37%, #000 37% 63%, transparent 63%), linear-gradient(-45deg, transparent 37%, #000 37% 63%, transparent 63%);
}
.k.half::after { opacity: .5; }

.split { height: 7px; display: flex; justify-content: center; align-items: center; padding-right: 6px; flex: none; }
.split i { width: 72px; height: 3px; background: radial-gradient(circle, #c4c4c4 1px, transparent 1.200px) 0 0 / 6px 3px; }
.low { padding-left: 3px; height: 17px; padding-top: 0; }
.layers { display: flex; height: 377px; width: 232px; flex: none; }
.list { flex: 1; overflow: hidden; padding-top: 1px; }
.list .row { letter-spacing: 0; font-weight: bold; }
.list .ko { font-weight: normal; }
.list .row svg { margin-left: 6px; }
.list .row span { margin-left: 7px; }
.list em { letter-spacing: 0; margin-left: 2px; }
.scroll { width: 16px; display: flex; flex-direction: column; }
.btn { height: 16px; border: 1px solid #888; border-radius: 2px; background: linear-gradient(#fff, #e4e4e4); display: flex; align-items: center; justify-content: center; }
.btn::after { content: ""; border: 4px solid transparent; }
.up::after { border-bottom: 4px solid #000; border-top: 0; }
.down::after { border-top: 4px solid #000; border-bottom: 0; }
.thumb { height: 163px; border: 1px solid #999; background: linear-gradient(90deg, #fff, #ddd); display: flex; align-items: center; justify-content: center; }
.thumb::after { content: ""; width: 12px; height: 20px; background: radial-gradient(circle, #aaa .8px, transparent 1px) 0 0 / 4px 4px; }
.track { flex: 1; background: conic-gradient(#e2e2e2 25%, #fff 0 50%, #e2e2e2 0 75%, #fff 0) 0 0 / 2px 2px; }

.vsplit { width: 7px; display: flex; flex: none; padding: 287px 0 0 1px; }
.vsplit i { width: 3px; height: 282px; background: radial-gradient(circle, #bbb 1px, transparent 1.200px) 0 0 / 3px 5px; }
.map { width: 1103px; height: 855px; margin-top: 1px; border: 1px solid #b4b4b4; border-radius: 2px; background: #000; flex: none; overflow: hidden; }
.map svg { width: 1101px; height: 853px; display: block; margin-top: 1px; }
.vsplit.r { width: 10px; padding-left: 3px; }

.right { width: 275px; flex: none; }
.right .ptitle { height: 17px; padding: 0 1px 0 0; }
.right .ptitle span { margin: 0 10px; font: 12px/17px "Liberation Sans", "Noto Sans CJK KR", sans-serif; }
.frame { margin: 12px 9px 0 6px; height: 819px; border: 1px solid #b4b4b4; border-radius: 2px; padding: 7px 0 0 10px; }
.frame p { margin: 0 0 0 1px; line-height: 17px; height: 17px; }
.frame .done { color: #888; }
.errs { height: 366px; width: 247px; margin-top: 3px; }
.errs .row { height: 12px; letter-spacing: .2px; }
.errs .row span { margin-left: 4px; line-height: 12px; position: relative; }
.errs .red { color: #f00; }
.errs .red span, .errs .sel span, .in.la { font-size: 12.500px; letter-spacing: -.45px; }
.errs .sel { background: #efefef; z-index: 1; }
.mark { position: absolute; left: 73px; top: -6px; width: 92px; height: 26px; border: 3px solid #f00; }
.group { width: 247px; height: 338px; margin-top: 27px; border: 1px solid #b4b4b4; border-radius: 2px; position: relative; padding: 18px 10px 0 11px; }
.group h3 { position: absolute; left: 6px; top: -11px; margin: 0; padding: 0 4px; background: #efefef; color: #333; font-size: 13px; line-height: 18px; font-weight: 500; letter-spacing: .7px; }
.f { display: flex; justify-content: space-between; align-items: center; height: 20px; margin-bottom: 12px; }
.f label { margin-left: -1px; }
.f .in { width: 150px; }
.in { height: 20px; border: 1px solid #b4b4b4; border-radius: 2px; background: #fff; box-shadow: inset 0 1px #e6e6e6; padding-left: 4px; line-height: 17px; white-space: nowrap; }
.in.focus { border: 2px solid #308cc6; line-height: 15px; padding-left: 3px; }
.pic { height: 120px; margin: -3px 0 8px; }
.thumbpic { width: 150px; height: 119px; border: 1px solid #b4b4b4; border-radius: 2px; background: #f8f8f8; padding: 1px; }
.thumbpic svg { width: 146px; height: 115px; background: #000; display: block; }
.push { height: 23px; border: 1px solid #b4b4b4; border-radius: 2px; background: linear-gradient(#fafafa, #dcdcdc); text-align: center; line-height: 20px; }
.mark2 { position: absolute; left: 3px; top: 264px; width: 240px; height: 70px; border: 3px solid #f00; }
.run { margin-top: 9px; width: 247px; }

.status { flex: 1; display: flex; align-items: center; padding: 0 0 0 7px; }
.status span { flex: none; }
.s0 { width: 759px; }
.s1 { width: 26px; }
.coord { width: 234px; text-align: center; letter-spacing: -1px; }
.mouse { width: 16px; height: 16px; margin: 0 15px 0 5px; }
.s2 { width: 26px; }
.scale { width: 90px; display: flex; justify-content: space-between; letter-spacing: 0; }
.drop { width: 16px; border-left: 1px solid #b4b4b4; background: linear-gradient(#fafafa, #ddd); display: flex; align-items: center; justify-content: center; }
.drop::after { content: ""; border: 4px solid transparent; border-top: 4px solid #000; border-bottom: 0; }
.lock { width: 12px; height: 16px; margin: 0 16px 0 7px; }
.s3 { width: 55px; letter-spacing: -.1px; }
.spin { width: 77px; display: flex; justify-content: space-between; }
.ud { width: 16px; border-left: 1px solid #b4b4b4; background: linear-gradient(#b4b4b4, #b4b4b4) center / 100% 1px no-repeat, #f4f4f4; display: flex; flex-direction: column; align-items: center; justify-content: space-around; }
.ud::before, .ud::after { content: ""; border: 4px solid transparent; }
.ud::before { border-bottom: 4px solid #000; border-top: 0; }
.ud::after { border-top: 4px solid #000; border-bottom: 0; }
.s4 { margin-left: 9px; width: 33px; }
.wide { letter-spacing: .5px; }
.status .k { margin: 0 5px 0 6px; }
.crs { width: 16px; height: 16px; margin: 0 4px 0 18px; }
.s6 { width: 85px; letter-spacing: -.7px; }
.msg { width: 17px; height: 16px; }
```
